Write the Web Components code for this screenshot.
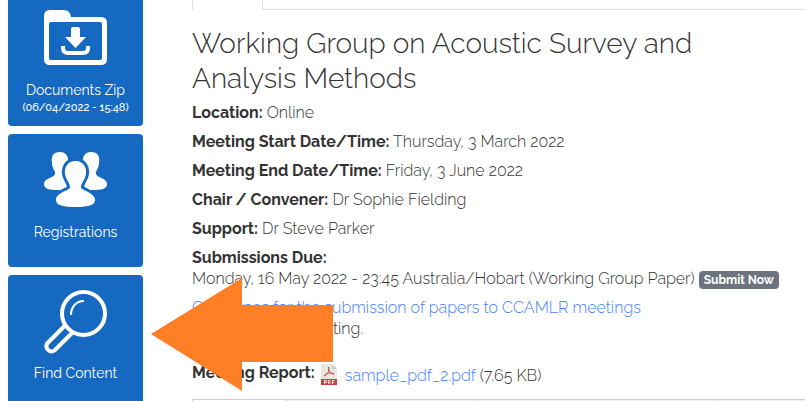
<!DOCTYPE html>
<html lang="en">
<head>
<meta charset="utf-8">
<title>Working Group on Acoustic Survey and Analysis Methods</title>
<style>
body{margin:0;background:#fff;color:#333;font:300 16px/21px Raleway,Lato,"Open Sans",sans-serif;font-variant-numeric:oldstyle-nums}
a{color:#3f7fff;text-decoration:none}
</style>
</head>
<body>
<meeting-page>
  <action-tile slot="side" class="cut" label="Documents Zip" note="(06/04/2022 - 15:48)">
    <svg width="64" height="56" viewBox="0 0 64 56" fill="none" aria-hidden="true"><path fill="#fff" fill-rule="evenodd" d="M6 0H20Q26 0 27 7H57Q63 7 63 13V49Q63 55 57 55H6Q0 55 0 49V6Q0 0 6 0ZM7 12Q5 12 5 14V48Q5 50 7 50H56Q58 50 58 48V14Q58 12 56 12Z"/><path fill="#fff" d="M29 17H34Q36 17 36 19V27H42L31.500 38L21 27H27V19Q27 17 29 17Z"/><path stroke="#fff" stroke-width="4" d="M19 36V38Q19 43 24 43H39Q44 43 44 38V36"/></svg>
  </action-tile>
  <action-tile slot="side" label="Registrations">
    <svg width="64" height="56" viewBox="0 0 64 56" aria-hidden="true"><g fill="#fff"><path d="M16 0C23 0 25 6 24 12C23 17 21 19 21 22C21 25 27 27 29 30C34 37 25 39 15 38C5 38 0 37 0 32C0 26 10 26 11 22C12 19 8 17 8 11C7 4 9 0 16 0Z"/><path d="M47 0C40 0 38 6 39 12C40 17 42 19 42 22C42 25 36 27 34 30C29 37 38 39 48 38C58 38 63 37 63 32C63 26 53 26 52 22C51 19 55 17 55 11C56 4 54 0 47 0Z"/><path stroke="#1669c1" stroke-width="6" paint-order="stroke" d="M31.500 9C39 9 43 15 42 22C41 28 37 31 37 35C37 39 51 40 51 48C51 54 42 55 31.500 55C21 55 12 54 12 48C12 40 26 39 26 35C26 31 22 28 21 22C20 15 24 9 31.500 9Z"/></g></svg>
  </action-tile>
  <action-tile slot="side" label="Find Content">
    <svg width="64" height="64" viewBox="0 0 64 64" fill="none" stroke="#fff" stroke-width="4" aria-hidden="true"><circle cx="39.500" cy="23.500" r="21.500"/><path d="M20.500 36L3.500 53C0 58 6 64 11 60L28 43"/><path stroke-width="2" d="M27 25C27 17 32 11 40 11"/></svg>
  </action-tile>

  <h1>Working Group on Acoustic Survey and Analysis Methods</h1>
  <meeting-field label="Location:">Online</meeting-field>
  <meeting-field label="Meeting Start Date/Time:">Thursday, 3 March 2022</meeting-field>
  <meeting-field label="Meeting End Date/Time:">Friday, 3 June 2022</meeting-field>
  <meeting-field label="Chair / Convener:">Dr Sophie Fielding</meeting-field>
  <meeting-field label="Support:">Dr Steve Parker</meeting-field>
  <meeting-field label="Submissions Due:" stacked>Monday, 16 May 2022 - 23:45 Australia/Hobart (Working Group Paper) <submit-badge></submit-badge></meeting-field>
  <div><a href="#guidelines">Guidelines for the submission of papers to CCAMLR meetings</a><br>Papers for this meeting.</div>
  <meeting-field class="report" label="Meeting Report:"><pdf-icon></pdf-icon><a href="#pdf">sample_pdf_2.pdf</a> (7.65 KB)</meeting-field>
</meeting-page>

<script>
function define(name, html){
  const t=document.createElement('template');
  t.innerHTML=html;
  customElements.define(name,class extends HTMLElement{
    constructor(){
      super();
      this.attachShadow({mode:'open'}).append(t.content.cloneNode(true));
    }
    connectedCallback(){
      for(const n of this.shadowRoot.querySelectorAll('[data-attr]')) n.textContent=this.getAttribute(n.dataset.attr)||'';
    }
  });
}
define('action-tile',`<style>
:host{display:block;height:133px}
:host(.cut){height:126px}
a{box-sizing:border-box;height:100%;padding-top:18px;display:flex;flex-direction:column;align-items:center;background:#1669c1;border-radius:4px;color:#fff;text-decoration:none;font-weight:400;font-size:14px;line-height:20px}
:host(.cut) a{padding-top:10px;border-radius:0 0 4px 4px}
.icon{height:70px}
:host([label="Find Content"]) a{padding-top:15px}
:host([label="Find Content"]) .icon{height:73px}
small{font-size:11px;line-height:16px;font-weight:500}
</style><a href="#open"><span class="icon"><slot></slot></span><span data-attr="label"></span><small data-attr="note"></small></a>`);
define('meeting-field',`<style>
:host{display:block;margin-bottom:8px}
b{font-weight:700}
:host([stacked]) b{display:block}
:host(.report){display:flex;gap:6px;margin:23px 0 13px}
:host(.report) span{padding-top:2px}
</style><b data-attr="label"></b> <span><slot></slot></span>`);
define('submit-badge',`<style>
:host{display:inline-block;vertical-align:middle}
button{display:block;border:0;border-radius:4px;background:#6c757d;color:#fff;font:700 12px/18px Raleway,Lato,sans-serif;padding:0 5px}
</style><button type="button">Submit Now</button>`);
define('pdf-icon',`<style>:host{display:inline-block;vertical-align:-4px;margin-right:8px}svg{display:block}</style>
<svg width="16" height="21" viewBox="0 0 16 21" role="img" aria-label="PDF"><path fill="#e8e7df" d="M0 0H11L16 5V21H0Z"/><path fill="#cfcec6" d="M11 0L16 5H11Z"/><path fill="none" stroke="#c9474b" d="M7.500 3C9 7 6 11 3 12C5 9 10 8 13 10C10 10 7 7 7.500 3Z"/><path fill="#cb3f45" d="M0 15H16V21H0Z"/><path fill="none" stroke="#fff" stroke-width=".9" d="M3.500 20V16.500H5.500V18.500H4M7.500 16.500H8.500L9.300 17.500V18.500L8.500 19.500H7.500ZM11.500 20V16.500H13.500M12 18.500H13"/></svg>`);
define('tab-strip',`<style>
:host{display:flex;border:1px solid #ccc;border-right:0;background:#f0f0f0}
button{height:32px;border:0;border-right:1px solid #ccc;background:none;padding:0;flex:0 0 188px}
button:first-of-type{background:#fff;flex-basis:93px}
button:nth-of-type(3){flex-basis:242px}
button:last-of-type{flex:1;border:0}
</style><button type="button" aria-label="Tab 1"></button><button type="button" aria-label="Tab 2"></button><button type="button" aria-label="Tab 3"></button><button type="button" aria-label="Tab 4"></button>`);
define('pointer-arrow',`<style>:host{position:absolute;left:151px;top:278px;pointer-events:none}svg{display:block}</style>
<svg width="182" height="113" viewBox="0 0 182 113" aria-hidden="true"><path fill="#ff7f27" d="M0 56L91 0V27H182V84H91V113Z"/></svg>`);
define('meeting-page',`<style>
:host{display:grid;grid-template-columns:135px minmax(0,1fr);column-gap:49px;padding-left:8px;height:100vh;overflow:hidden;position:relative}
nav{display:flex;flex-direction:column;gap:8px}
.top{display:flex;height:10px}
.top i{box-sizing:border-box;width:71px;border:solid #dee2e6;border-width:0 1px}
.top u{box-sizing:border-box;flex:1;border-bottom:1px solid #dee2e6}
::slotted(h1){font-size:28px;line-height:35px;font-weight:300;margin:16px 100px 6px 0}
</style>
<nav><slot name="side"></slot></nav>
<main><div class="top"><i></i><u></u></div><slot></slot><tab-strip></tab-strip></main>
<pointer-arrow></pointer-arrow>`);
</script>
</body>
</html>
